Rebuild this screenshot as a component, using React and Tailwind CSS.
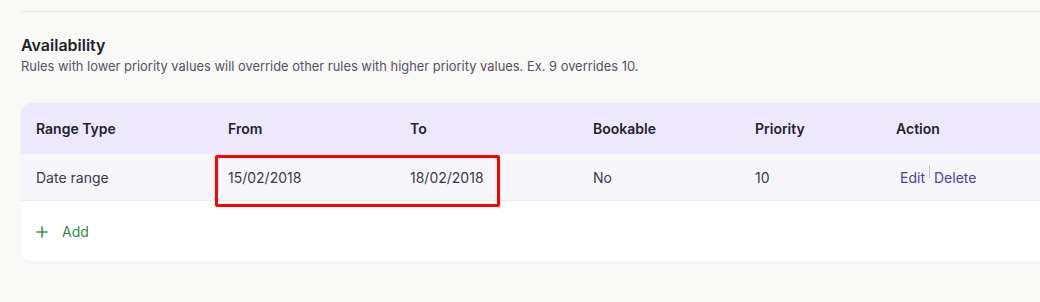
// Availability rules table with highlighted date range.
const rows = [
  { type: "Date range", from: "15/02/2018", to: "18/02/2018", bookable: "No", priority: "10" },
];

const cols = "grid grid-cols-[192px_182px_183px_162px_141px_1fr] items-center pl-[15px]";

export default function App() {
  return (
    <div
      className="h-[302px] w-[1040px] overflow-hidden bg-[#f9f9f8] pl-[21px] pt-[11px] text-[14px] text-[#34323f]"
      style={{ fontFamily: "Inter, 'Noto Sans', sans-serif" }}
    >
      <div className="border-t border-[#e6e6e4]" />

      {/* Heading */}
      <div className="pt-[23px]">
        <h2 className="text-[16px] font-semibold leading-[20px] text-[#1f1e27]">Availability</h2>
        <p className="mt-[3px] text-[12.9px] leading-[18px] text-[#55535f]">
          Rules with lower priority values will override other rules with higher priority values. Ex. 9 overrides 10.
        </p>
      </div>

      {/* Card */}
      <div className="relative mt-[27px] w-[1100px] overflow-hidden rounded-[10px] bg-white shadow-[0_1px_2px_rgba(0,0,0,0.06)]">
        <div className={`${cols} h-[51px] bg-[#ede8fd] font-semibold text-[#24222e]`}>
          <span>Range Type</span>
          <span>From</span>
          <span>To</span>
          <span>Bookable</span>
          <span>Priority</span>
          <span>Action</span>
        </div>

        {rows.map((r, i) => (
          <div key={i} className={`${cols} h-[47px] border-b border-[#ececef] bg-[#f7f6fb] text-[#3a3848]`}>
            <span>{r.type}</span>
            <span>{r.from}</span>
            <span>{r.to}</span>
            <span>{r.bookable}</span>
            <span>{r.priority}</span>
            <span className="flex items-start pl-[4px] text-[#4b3f9e]">
              <span>Edit</span>
              <span className="mx-[4px] mt-[-2px] h-[13px] w-px bg-[#c4c2cc]" />
              <span>Delete</span>
            </span>
          </div>
        ))}

        <div className="flex h-[61px] items-center gap-[14px] pl-[15px] text-[14px] text-[#2e8a3e]">
          <svg width="12" height="12" viewBox="0 0 12 12" className="mt-[1px]">
            <path d="M6 0.5v11M0.5 6h11" stroke="#2f9a44" strokeWidth="1.6" />
          </svg>
          <span>Add</span>
        </div>

        {/* Highlight annotation */}
        <div className="absolute left-[194px] top-[52px] h-[52px] w-[285px] rounded-[2px] border-[3px] border-[#ff0000]" />
      </div>
    </div>
  );
}
